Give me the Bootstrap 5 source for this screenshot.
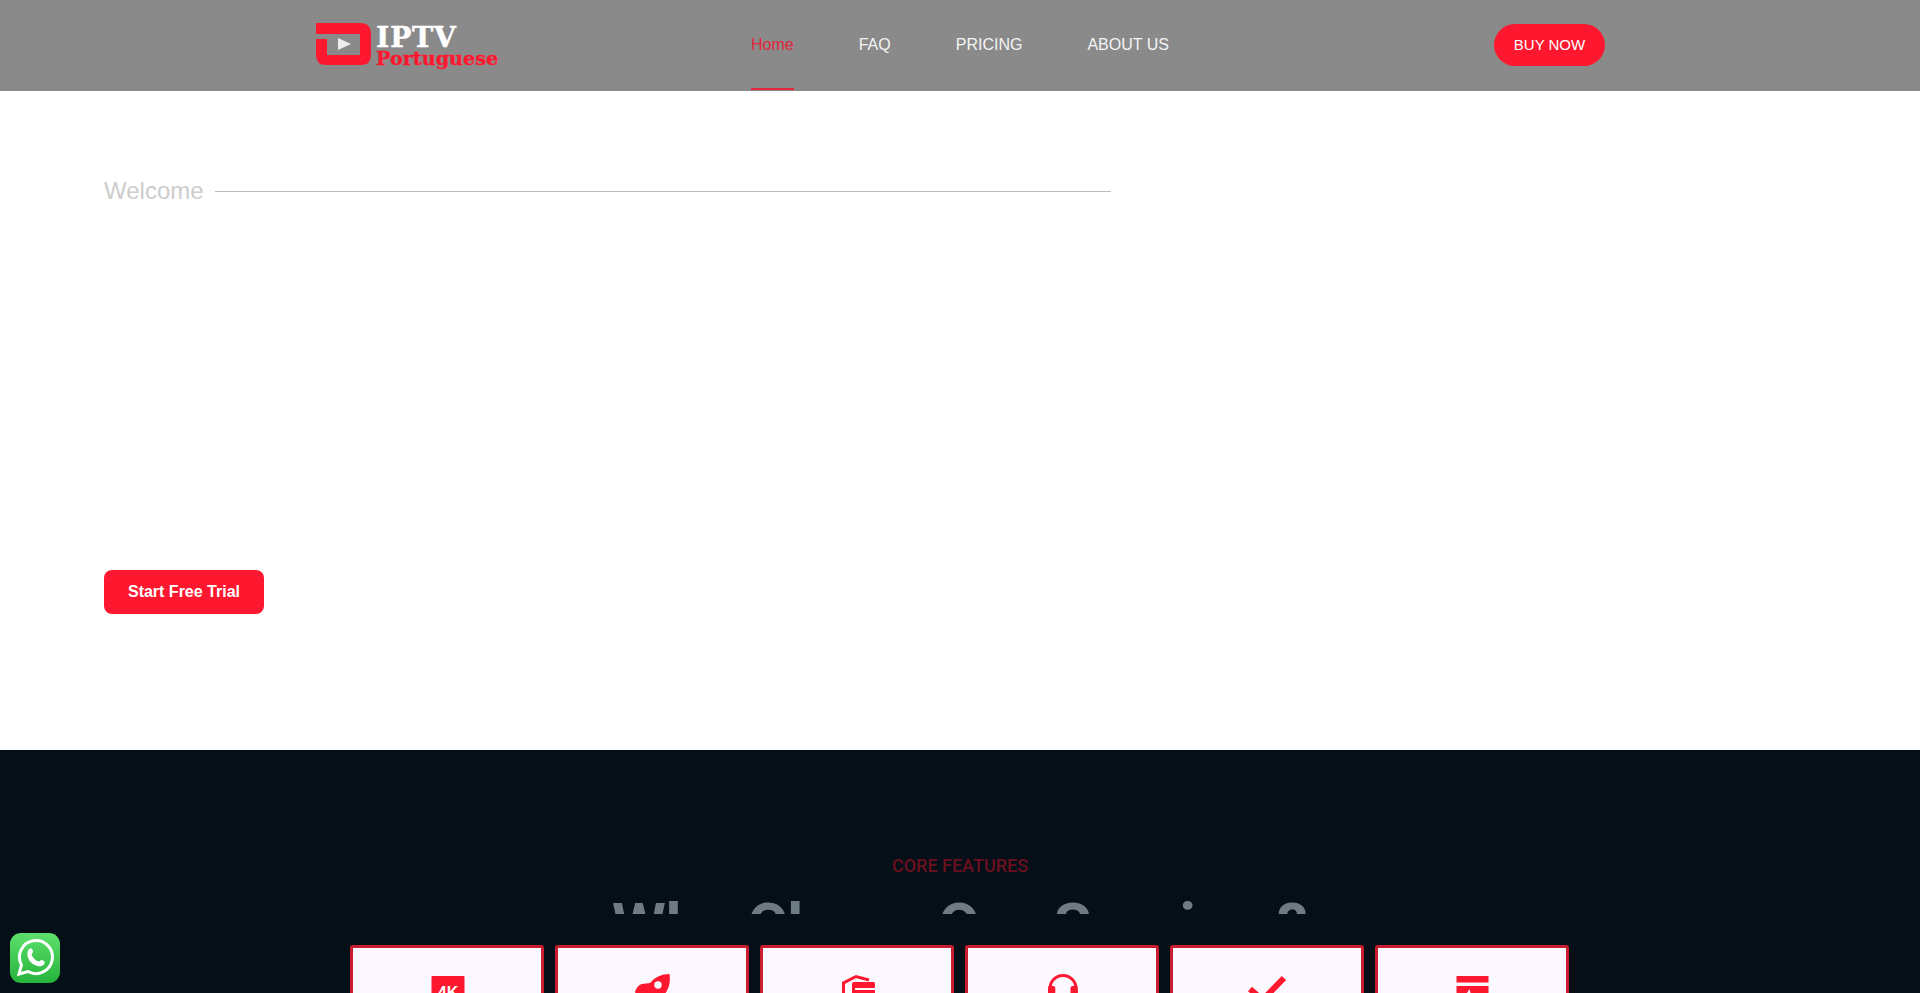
<!DOCTYPE html>
<html lang="en">
<head>
<meta charset="utf-8">
<title>IPTV Portuguese</title>
<link href="https://cdn.jsdelivr.net/npm/bootstrap@5.3.0/dist/css/bootstrap.min.css" rel="stylesheet">
<style>
html,body{height:993px;overflow:hidden}
body{font-family:"Liberation Sans",Arial,sans-serif;background:#fff}
.top-bar{height:91px;background:#8a8a8a;padding:0 315px 0 316px}
.brand-box{width:183px;margin-top:23px;gap:5px}
.brand-mark{width:55px;height:42px;flex:none}
.brand-one{font-family:"DejaVu Serif",serif;font-weight:700;font-size:28.5px;line-height:23px;letter-spacing:.6px;color:#fff;margin-top:3px;-webkit-text-stroke:.4px #fff}
.brand-two{font-family:"DejaVu Serif",serif;font-weight:700;font-size:19.2px;line-height:19px;color:#fe182f;-webkit-text-stroke:.4px #fe182f;white-space:nowrap}
.menu-list{margin-left:252px;gap:65px}
.menu-link{display:flex;align-items:center;height:90px;padding-top:1px;color:#f4f4f4;font-size:16px;text-decoration:none;border-bottom:2px solid transparent}
.menu-link.on{color:#e3263a;border-bottom-color:#e3263a}
.buy-pill{width:111px;height:42px;margin-top:24px;border-radius:21px;background:#fe182f;color:#fff;font-size:15px;border:0;padding:0}
.hero-part{height:659px;padding:0 104px}
.welcome-zone{height:479px;padding-top:81px}
.welcome-row{width:1007px;gap:11px}
.welcome-txt{color:#ccc;font-size:24px;line-height:38px}
.welcome-line{height:1px;background:#bdbdbd}
.trial-btn{width:160px;height:44px;background:#fe182f;color:#fff;font-weight:700;font-size:16px;border:0;border-radius:8px;padding:0}
.dark-part{background:#040f17;height:243px;padding-top:105px}
.core-lab{color:#6b1020;font-family:Roboto,sans-serif;font-weight:500;font-size:18px;line-height:22px}
.head-clip{height:20px;overflow:hidden;margin-top:17px}
.head-txt{color:#6f7b83;font-family:Roboto,sans-serif;font-weight:700;font-size:61.5px;line-height:64px;margin:0;letter-spacing:.2px;white-space:nowrap}
.cards-row{gap:11px;margin:31px 0 0 350px;width:1219px}
.feat-box{width:194px;height:200px;flex:none;background:#fbf9ff;border:3px solid #c81e30;border-radius:3px;padding:28px 0 0 2px}
.feat-ico{width:36px;height:36px;display:block;margin:0 auto;overflow:visible}
.chat-btn{position:fixed;left:10px;top:933px;width:50px;height:50px;border-radius:11px;background:linear-gradient(#5ee06d,#25b33b)}
</style>
</head>
<body>
<nav class="top-bar d-flex align-items-start">
  <a class="brand-box d-flex align-items-start text-decoration-none" href="#">
    <svg class="brand-mark" viewBox="0 0 55 42" aria-hidden="true"><path fill="#fe182f" fill-rule="evenodd" d="M0 0H44Q55 0 55 11V32Q55 42 45 42H10Q0 42 0 32V16H11V32H44V11H0Z"/><path fill="#eee" d="M22 15L35 21L22 27Z"/></svg>
    <span class="d-block"><span class="brand-one d-block">IPTV</span><span class="brand-two d-block">Portuguese</span></span>
  </a>
  <div class="menu-list d-flex">
    <a class="menu-link on" href="#">Home</a>
    <a class="menu-link" href="#">FAQ</a>
    <a class="menu-link" href="#">PRICING</a>
    <a class="menu-link" href="#">ABOUT US</a>
  </div>
  <button class="buy-pill ms-auto" type="button">BUY NOW</button>
</nav>
<section class="hero-part">
  <div class="welcome-zone">
    <div class="welcome-row d-flex align-items-center">
      <span class="welcome-txt">Welcome</span>
      <span class="welcome-line flex-grow-1"></span>
    </div>
  </div>
  <button class="trial-btn" type="button">Start Free Trial</button>
</section>
<section class="dark-part">
  <div class="core-lab text-center">CORE FEATURES</div>
  <div class="head-clip text-center"><h2 class="head-txt">Why Chose Our Service ?</h2></div>
  <div class="cards-row d-flex">
    <div class="feat-box"><svg class="feat-ico" viewBox="0 0 36 36"><rect x="1.500" width="33" height="36" rx="1" fill="#fe182f"/><text x="18" y="22" text-anchor="middle" font-family="Liberation Sans" font-weight="700" font-size="16" fill="#fff">4K</text></svg></div>
    <div class="feat-box"><svg class="feat-ico" viewBox="0 0 36 36"><path fill="#fe182f" d="M34.500-2C27-2 20 1 15 7L7 8C3 9 1 13 0 16L2 20L10 19L16 25L15 33L19 35C23 34 27 31 28 27L28 20C33 15 36 8 34.500-2Z"/><circle cx="23" cy="9" r="3.700" fill="#fbf9ff"/></svg></div>
    <div class="feat-box"><svg class="feat-ico" viewBox="0 0 36 36"><path fill="none" stroke="#fe182f" stroke-width="3" d="M3.500 36V7L16 0.500L29 4"/><path fill="none" stroke="#fe182f" stroke-width="3" d="M13.500 8V30"/><rect x="12" y="6" width="23" height="6" rx="1.500" fill="#fe182f"/><rect x="12" y="14" width="23" height="4" fill="#fe182f"/><rect x="12" y="21" width="23" height="4" fill="#fe182f"/></svg></div>
    <div class="feat-box"><svg class="feat-ico" viewBox="0 0 36 36"><path fill="none" stroke="#fe182f" stroke-width="3" d="M5 17V12.500A13 13 0 0 1 31 12.500V17"/><rect x="3" y="10" width="7.300" height="25" rx="2" fill="#fe182f"/><rect x="25.500" y="10" width="7.300" height="25" rx="2" fill="#fe182f"/></svg></div>
    <div class="feat-box"><svg class="feat-ico" viewBox="0 0 36 36"><path fill="none" stroke="#fe182f" stroke-width="6" d="M0 13L12.500 24L34 2"/></svg></div>
    <div class="feat-box"><svg class="feat-ico" viewBox="0 0 36 36"><rect x="1.500" y="0" width="32" height="6.500" fill="#fe182f"/><rect x="1.500" y="10" width="32" height="26" fill="#fe182f"/><path fill="#fbf9ff" d="M12 17L14.500 13L15.500 17Z"/></svg></div>
  </div>
</section>
<a class="chat-btn d-flex align-items-center justify-content-center" href="#" aria-label="WhatsApp">
  <svg width="38" height="38" viewBox="0 0 38 38"><path fill="none" stroke="#fff" stroke-width="3" d="M3 35L5.500 26A16.500 16.500 0 1 1 12 32.500Z"/><path fill="#fff" d="M13 10C15 8.500 16 9 17 12C17.500 13.500 16 14 15.500 15.500C16.500 18.500 19.500 21.500 22.500 22.500C24 22 24.500 20.500 26 21C29 22.500 29.500 23 28 25.500C26 28 22 28 17 25C12 21.500 9.500 15 13 10Z"/></svg>
</a>
</body>
</html>
